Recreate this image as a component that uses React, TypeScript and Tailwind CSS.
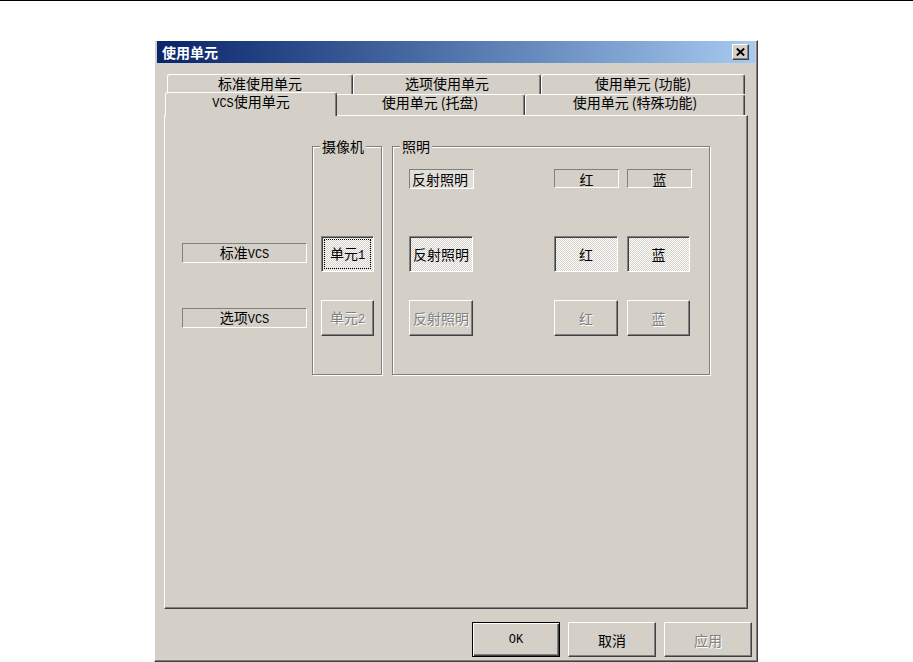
import React from "react";

const raised =
  "border border-t-white border-l-white border-r-[#404040] border-b-[#404040] shadow-[inset_-1px_-1px_0_#808080] bg-[#d4d0c8]";
const pressed =
  "border border-t-[#808080] border-l-[#808080] border-r-white border-b-white shadow-[inset_1px_1px_0_#404040] [background-image:repeating-conic-gradient(#ffffff_0_25%,#d4d0c8_0_50%)] [background-size:2px_2px]";
const defaultFrame =
  "border border-black shadow-[inset_1px_1px_0_#fff,inset_-1px_-1px_0_#404040,inset_-2px_-2px_0_#808080] bg-[#d4d0c8]";

function Latin({ children }: { children: React.ReactNode }) {
  return (
    <span className="[font-family:'Liberation_Mono',monospace] text-[12px]">
      {children}
    </span>
  );
}

type BtnProps = {
  kind: "raised" | "pressed" | "default";
  disabled?: boolean;
  focus?: boolean;
  className?: string;
  children: React.ReactNode;
};

function Btn({ kind, disabled, focus, className = "", children }: BtnProps) {
  const frame =
    kind === "pressed" ? pressed : kind === "default" ? defaultFrame : raised;
  const text = disabled
    ? "text-[#808080] [text-shadow:1px_1px_0_#fff]"
    : "text-black";
  return (
    <div className={`${frame} ${className} flex items-stretch p-[2px]`}>
      <div
        className={`flex-1 flex items-center justify-center leading-[16px] ${
          focus ? "border border-dotted border-black" : ""
        } ${text}`}
      >
        {children}
      </div>
    </div>
  );
}

function StaticBox({
  className = "",
  children,
}: {
  className?: string;
  children: React.ReactNode;
}) {
  return (
    <div
      className={`border border-t-[#808080] border-l-[#808080] border-r-white border-b-white flex items-center leading-[16px] ${className}`}
    >
      {children}
    </div>
  );
}

function Group({
  label,
  className = "",
  children,
}: {
  label: string;
  className?: string;
  children: React.ReactNode;
}) {
  return (
    <div
      className={`relative border border-[#808080] shadow-[inset_1px_1px_0_#fff,1px_1px_0_#fff] ${className}`}
    >
      <span className="absolute -top-[9px] left-[7px] px-[2px] bg-[#d4d0c8] leading-[16px]">
        {label}
      </span>
      {children}
    </div>
  );
}

function Tab({
  className = "",
  children,
}: {
  className?: string;
  children: React.ReactNode;
}) {
  return (
    <div
      className={`flex justify-center border-t border-l border-t-white border-l-white border-r border-r-[#404040] shadow-[inset_-1px_0_0_#808080] rounded-t-[3px] bg-[#d4d0c8] ${className}`}
    >
      {children}
    </div>
  );
}

export default function App() {
  return (
    <div className="h-[662px] overflow-hidden bg-white border-t border-black [font-family:'Noto_Sans_CJK_SC',sans-serif] text-[14px] text-black leading-none">
      <div className="ml-[154px] mt-[39px] w-[604px] h-[622px] bg-[#d4d0c8] border border-t-white border-l-white border-r-[#404040] border-b-[#404040] shadow-[inset_-1px_-1px_0_#808080] px-[2px] flex flex-col">
        {/* caption */}
        <div className="h-[22px] flex items-center justify-between bg-linear-to-r from-[#0a246a] to-[#a6caf0] pl-[5px] pr-[6px]">
          <span className="text-white font-bold text-[14px] leading-[16px]">
            使用单元
          </span>
          <div className={`${raised} w-[17px] h-[16px] flex items-center justify-center`}>
            <svg width="9" height="8" viewBox="0 0 9 8">
              <path
                d="M0.8 0.5 L8.2 7.5 M8.2 0.5 L0.8 7.5"
                stroke="#000"
                strokeWidth="1.9"
                fill="none"
              />
            </svg>
          </div>
        </div>

        {/* tabs row 1 */}
        <div className="mt-[11px] ml-[10px] flex h-[20px]">
          <Tab className="w-[186px] leading-[14px] pt-[1px]">标准使用单元</Tab>
          <Tab className="w-[188px] leading-[14px] pt-[1px]">选项使用单元</Tab>
          <Tab className="w-[204px] leading-[14px] pt-[1px]">使用单元 (功能)</Tab>
        </div>
        {/* tabs row 2 */}
        <div className="ml-[10px] flex h-[21px]">
          <Tab className="relative z-10 -ml-[2px] -mr-[2px] -mt-[2px] h-[24px] w-[172px] leading-[14px] pt-[1px]">
            <span>
              <Latin>VCS</Latin>使用单元
            </span>
          </Tab>
          <Tab className="w-[190px] leading-[14px]">使用单元 (托盘)</Tab>
          <Tab className="w-[220px] leading-[14px]">使用单元 (特殊功能)</Tab>
        </div>

        {/* panel */}
        <div className="ml-[7px] w-[584px] h-[494px] shrink-0 border border-t-white border-l-white border-r-[#404040] border-b-[#404040] shadow-[inset_-1px_-1px_0_#808080] flex items-start">
          <div className="ml-[17px] mt-[127px] w-[125px] flex flex-col gap-[45px]">
            <StaticBox className="h-[20px] justify-center">
              <span>
                标准<Latin>VCS</Latin>
              </span>
            </StaticBox>
            <StaticBox className="h-[20px] justify-center">
              <span>
                选项<Latin>VCS</Latin>
              </span>
            </StaticBox>
          </div>

          <Group label="摄像机" className="ml-[5px] mt-[30px] w-[70px] h-[229px]">
            <div className="pl-[8px] pt-[89px] flex flex-col gap-[28px]">
              <Btn kind="pressed" focus className="w-[53px] h-[36px]">
                <span>
                  单元<Latin>1</Latin>
                </span>
              </Btn>
              <Btn kind="raised" disabled className="w-[53px] h-[36px]">
                <span>
                  单元<Latin>2</Latin>
                </span>
              </Btn>
            </div>
          </Group>

          <Group label="照明" className="ml-[10px] mt-[30px] w-[318px] h-[229px]">
            <div className="pt-[22px] flex flex-col">
              <div className="flex">
                <StaticBox className="ml-[16px] w-[65px] h-[20px] pl-[2px] bg-[#e2dfda]">
                  反射照明
                </StaticBox>
                <StaticBox className="ml-[80px] w-[65px] h-[19px] justify-center">
                  红
                </StaticBox>
                <StaticBox className="ml-[8px] w-[65px] h-[19px] justify-center">
                  蓝
                </StaticBox>
              </div>
              <div className="flex mt-[47px]">
                <Btn kind="pressed" className="ml-[16px] w-[64px] h-[36px]">
                  反射照明
                </Btn>
                <Btn kind="pressed" className="ml-[81px] w-[64px] h-[36px]">
                  红
                </Btn>
                <Btn kind="pressed" className="ml-[9px] w-[63px] h-[36px]">
                  蓝
                </Btn>
              </div>
              <div className="flex mt-[28px]">
                <Btn kind="raised" disabled className="ml-[16px] w-[64px] h-[36px]">
                  反射照明
                </Btn>
                <Btn kind="raised" disabled className="ml-[81px] w-[64px] h-[36px]">
                  红
                </Btn>
                <Btn kind="raised" disabled className="ml-[9px] w-[63px] h-[36px]">
                  蓝
                </Btn>
              </div>
            </div>
          </Group>
        </div>

        {/* bottom buttons */}
        <div className="flex-1 flex justify-end items-start pt-[13px] pr-[3px] gap-[8px]">
          <Btn kind="default" className="w-[88px] h-[35px]">
            <Latin>OK</Latin>
          </Btn>
          <Btn kind="raised" className="w-[88px] h-[35px]">
            取消
          </Btn>
          <Btn kind="raised" disabled className="w-[88px] h-[35px]">
            应用
          </Btn>
        </div>
      </div>
    </div>
  );
}
